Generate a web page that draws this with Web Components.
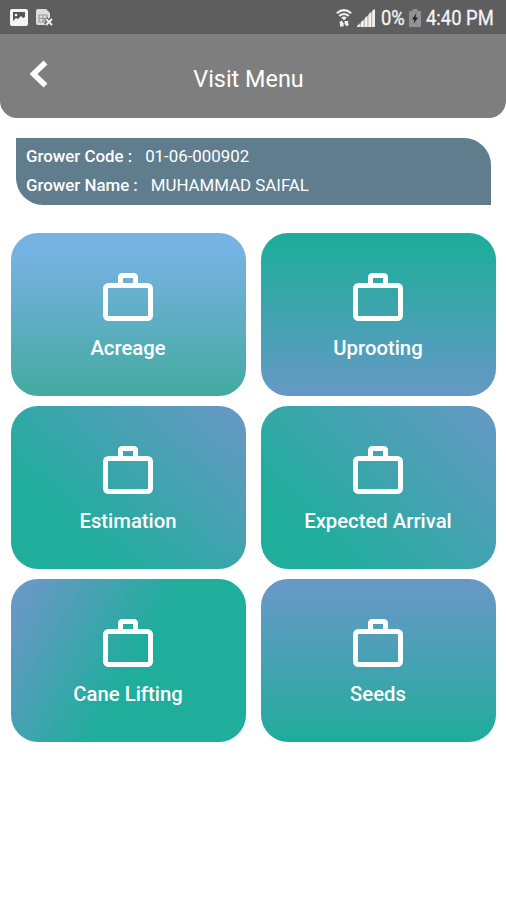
<!DOCTYPE html>
<html lang="en">
<head>
<meta charset="utf-8">
<title>Visit Menu</title>
<style>
    body {
        margin: 0;
        background-color: #fff;
        font-family: Roboto, "Noto Sans", sans-serif;
        color: #fff;
    }
</style>
</head>
<body>
<visit-page>
    <status-bar slot="top">
        <span slot="battery">0%</span>
        <span slot="time">4:40 PM</span>
    </status-bar>
    <app-header slot="top">Visit Menu</app-header>
    <grower-card>
        <grower-field><span slot="label">Grower Code :</span>01-06-000902</grower-field>
        <grower-field class="name"><span slot="label">Grower Name :</span>MUHAMMAD SAIFAL</grower-field>
    </grower-card>
    <menu-grid>
        <menu-tile class="acreage">Acreage</menu-tile>
        <menu-tile class="uprooting">Uprooting</menu-tile>
        <menu-tile class="estimation">Estimation</menu-tile>
        <menu-tile class="arrival">Expected Arrival</menu-tile>
        <menu-tile class="lifting">Cane Lifting</menu-tile>
        <menu-tile class="seeds">Seeds</menu-tile>
    </menu-grid>
</visit-page>
<script>
class BaseElement extends HTMLElement {
    constructor() {
        super();
        this.attachShadow({mode: 'open'});
    }
    getTemplate() {
        const template = document.createElement("template");
        template.innerHTML = `
            <style>${this.getStyles()}</style>
            ${this.getMarkup()}
        `;
        return template;
    }
    connectedCallback() {
        if (this.shadowRoot.childNodes.length) return;
        this.shadowRoot.appendChild(this.getTemplate().content.cloneNode(true));
    }
}

class VisitPage extends BaseElement {
    getMarkup() {
        return `
            <div class="top"><slot name="top"></slot></div>
            <main><slot></slot></main>
        `;
    }
    getStyles() {
        return `
            :host {
                display: block;
                min-height: 900px;
                background-color: #fff;
            }
            .top {
                border-radius: 0 0 17px 17px;
                overflow: hidden;
            }
            main {
                display: flex;
                flex-direction: column;
                gap: 28px;
                padding: 20px 10px 0 11px;
            }
        `;
    }
}

class StatusBar extends BaseElement {
    getMarkup() {
        return `
            <svg width="18" height="17" viewBox="0 0 18 17">
                <rect width="18" height="17" rx="2" fill="#f4f4f4"/>
                <path d="M3 3h12v5l-2 1-2-2-3 3-2-1-3 3z" fill="#555"/>
                <circle cx="6" cy="6" r="1.3" fill="#f4f4f4"/>
            </svg>
            <svg class="sim" width="17" height="17" viewBox="0 0 17 17">
                <path d="M2 0h8l4 4v5l-4 7H2q-2 0-2-2V2q0-2 2-2z" fill="#dedede"/>
                <path d="M3 6h8v7H3zM3 9.500h8M7 6v7" fill="none" stroke="#999" stroke-width="1.200"/>
                <path d="M9.500 9.500l6.500 6.500M16 9.500L9.500 16" stroke="#5e5e5e" stroke-width="4"/>
                <path d="M10 10l6 6M16 10l-6 6" stroke="#eee" stroke-width="2"/>
            </svg>
            <svg class="wifi" width="16" height="18" viewBox="0 0 16 18" fill="none" stroke="#f0f0f0">
                <path d="M.8 4.300Q8-2 15.200 4.300M3.200 7Q8 3 12.800 7" stroke-width="2"/>
                <path d="M5.300 8.500Q8 6.500 10.700 8.500L8 11.500z" fill="#f0f0f0" stroke="none"/>
                <path d="M3 14l2.300-2.500L7.600 14v3.500H4V14zM8.600 12h3.600v3h1l-2.300 2.500L8.600 15z" fill="#f0f0f0" stroke="none"/>
            </svg>
            <svg class="signal" width="18" height="18" viewBox="0 0 18 18" fill="#efefef">
                <path d="M0 18L18 0v18z" fill="#a8a8a8"/>
                <path d="M0 18v-1l2.800-2.800V18zM3.800 18v-4.800l2.800-2.800V18zM7.600 18V9.400l2.800-2.800V18zM11.400 18V5.600l2.800-2.800V18zM15.200 18V1.800L18 0v18z"/>
            </svg>
            <span class="percent"><slot name="battery"></slot></span>
            <svg class="cell" width="12" height="18" viewBox="0 0 12 18">
                <path d="M3.500 0h5v2H11q1 0 1 1v14q0 1-1 1H1q-1 0-1-1V3q0-1 1-1h2.500z" fill="#929292"/>
                <path d="M7.500 4L3 10.500h2.500L4.500 15 9 8.500H6.500z" fill="#222"/>
            </svg>
            <span class="time"><slot name="time"></slot></span>
        `;
    }
    getStyles() {
        return `
            :host {
                display: flex;
                align-items: center;
                box-sizing: border-box;
                height: 34px;
                padding: 1px 10px 0 10px;
                background-color: #5e5e5e;
                font-size: 20px;
                line-height: 34px;
                color: #f4f4f4;
                white-space: nowrap;
                -webkit-text-stroke: .3px;
            }
            .sim { margin-left: 8px; }
            .wifi { margin-left: auto; }
            .signal { margin-left: 5px; }
            span {
                transform: scaleX(.92);
                transform-origin: left;
            }
            .percent {
                width: 24px;
                margin-left: 6px;
            }
            .cell { margin-left: 4px; }
            .time {
                width: 70px;
                margin-left: 5px;
            }
        `;
    }
}

class AppHeader extends BaseElement {
    getMarkup() {
        return `
            <svg width="18" height="28" viewBox="0 0 18 28">
                <path d="M15.500 2.500L3.500 14l12 11.500" fill="none" stroke="#fff" stroke-width="5.500"/>
            </svg>
            <h1><slot></slot></h1>
        `;
    }
    getStyles() {
        return `
            :host {
                display: grid;
                grid-template-columns: 48px 1fr 48px;
                align-items: center;
                height: 84px;
                background-color: #7e7e7e;
            }
            svg {
                margin: 0 0 4px 30px;
            }
            h1 {
                margin: 5px 0 0 -9px;
                font-size: 23.400px;
                font-weight: 400;
                text-align: center;
            }
        `;
    }
}

class GrowerCard extends BaseElement {
    getMarkup() {
        return `<slot></slot>`;
    }
    getStyles() {
        return `
            :host {
                display: flex;
                flex-direction: column;
                box-sizing: border-box;
                height: 67px;
                margin: 0 5px;
                padding: 4px 10px;
                border-radius: 0 27px 0 27px;
                background-color: #607d8d;
            }
        `;
    }
}

class GrowerField extends BaseElement {
    getMarkup() {
        return `
            <b><slot name="label"></slot></b>
            <span><slot></slot></span>
        `;
    }
    getStyles() {
        return `
            :host {
                display: flex;
                gap: 13px;
                font-size: 16.850px;
                line-height: 29px;
                white-space: nowrap;
            }
            b { font-weight: 500; }
        `;
    }
}

class MenuGrid extends BaseElement {
    getMarkup() {
        return `<slot></slot>`;
    }
    getStyles() {
        return `
            :host {
                display: grid;
                grid-template-columns: 1fr 1fr;
                gap: 10px 15px;
            }
        `;
    }
}

class MenuTile extends BaseElement {
    getMarkup() {
        return `
            <svg width="50" height="48" viewBox="0 0 50 48" fill="none" stroke="#fff" stroke-width="5">
                <rect x="2.500" y="12.500" width="45" height="33" rx="3"/>
                <path d="M17.500 12V4.500q0-2 2-2h11q2 0 2 2V12"/>
            </svg>
            <span><slot></slot></span>
        `;
    }
    getStyles() {
        return `
            :host {
                display: flex;
                flex-direction: column;
                align-items: center;
                box-sizing: border-box;
                height: 163px;
                padding: 40px 1px 0 0;
                border-radius: 27px;
                font-size: 20.300px;
                font-weight: 500;
                line-height: 24px;
            }
            :host(.acreage) {
                background: linear-gradient(#76b2e2 12%, #43aaa0);
            }
            :host(.uprooting) {
                background: linear-gradient(#20ac9c 8%, #6699c6);
            }
            :host(.estimation) {
                background: linear-gradient(41deg, #1fad9c 25%, #6699c4 96%);
            }
            :host(.arrival) {
                background: linear-gradient(45deg, #1fad9c 20%, #6699c4 98%);
            }
            :host(.lifting) {
                background: linear-gradient(120deg, #6699c4 8%, #1fad9c 52%);
            }
            :host(.seeds) {
                background: linear-gradient(#6699c6 8%, #20ac9c);
            }
            span { margin-top: 15px; }
        `;
    }
}

customElements.define('visit-page', VisitPage);
customElements.define('status-bar', StatusBar);
customElements.define('app-header', AppHeader);
customElements.define('grower-card', GrowerCard);
customElements.define('grower-field', GrowerField);
customElements.define('menu-grid', MenuGrid);
customElements.define('menu-tile', MenuTile);
</script>
</body>
</html>
